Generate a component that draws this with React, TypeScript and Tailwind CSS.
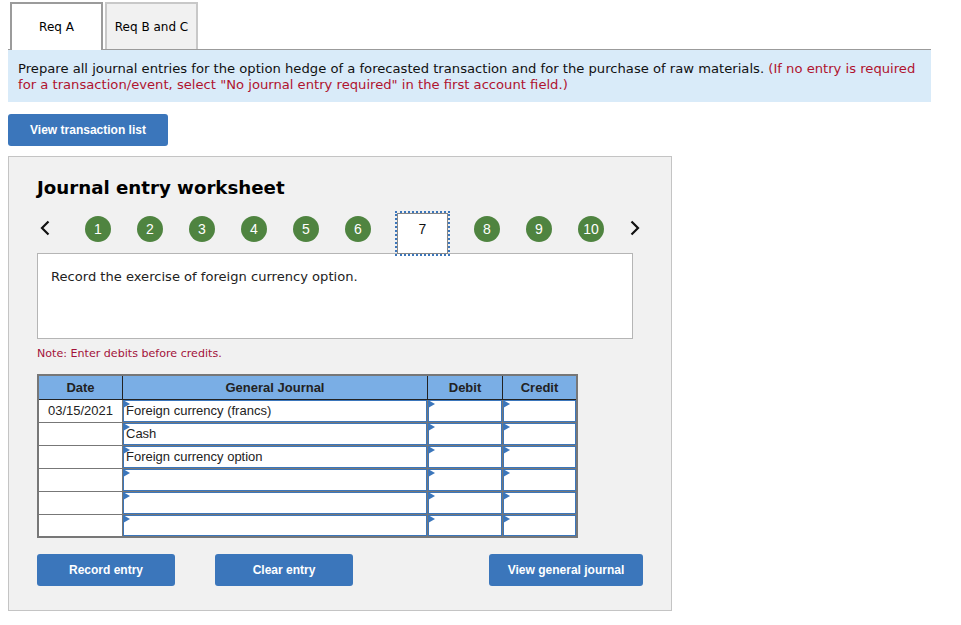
const verdana = "font-['DejaVu_Sans',Verdana,sans-serif]"
const arial = "font-['Liberation_Sans',Arial,sans-serif]"

const rows = ["Foreign currency (francs)", "Cash", "Foreign currency option", "", "", ""]

function Flag() {
  return (
    <svg className="absolute -left-[1px] -top-[1px]" width="7" height="8" viewBox="0 0 7 8">
      <path d="M0 0 L7 4 L0 8 Z" fill="#3b76bb" />
    </svg>
  )
}

function EntryCell({ width, text }: { width: string; text?: string }) {
  return (
    <div className={`relative h-full ${width} shrink-0 border border-[#3b76bb] bg-white pl-[2px] text-[13px] leading-[20px] text-[#222]`}>
      <Flag />
      {text}
    </div>
  )
}

function Step({ n }: { n: number }) {
  return (
    <div className={`mt-[4px] flex h-[26px] w-[26px] shrink-0 items-center justify-center rounded-full bg-[#4f8440] text-[14px] text-white ${arial}`}>
      {n}
    </div>
  )
}

function Btn({ label, width }: { label: string; width: string }) {
  return (
    <button className={`flex h-[32px] ${width} items-center justify-center rounded-[3px] bg-[#3b76bb] text-[12px] font-bold text-white ${arial}`}>
      {label}
    </button>
  )
}

export default function App() {
  return (
    <div className={`h-[625px] w-[961px] bg-white pl-[8px] pt-[2px] ${verdana}`}>
      {/* Tabs */}
      <div className="flex h-[48px] pl-[2px]">
        <div className="z-10 flex h-[48px] w-[93px] items-center justify-center border-2 border-b-0 border-[#9b9b9b] bg-white text-[12px] text-black">
          Req A
        </div>
        <div className="ml-[2px] flex h-[47px] w-[93px] items-center justify-center border-2 border-b-0 border-[#c8c8c8] bg-[#f1f1f1] text-[12px] text-black">
          Req B and C
        </div>
      </div>

      <div className="-mt-[1px] w-[923px] border-t border-[#9b9b9b] bg-[#d9ebf9] px-[10px] pb-[9px] pt-[11px] text-[13.15px] leading-[16px] text-[#111]">
        Prepare all journal entries for the option hedge of a forecasted transaction and for the purchase of raw materials.{" "}
        <span className="text-[#b0132f]">
          (If no entry is required for a transaction/event, select "No journal entry required" in the first account field.)
        </span>
      </div>

      <Btn label="View transaction list" width="w-[160px] mt-[12px]" />

      <div className="mt-[10px] h-[455px] w-[664px] border border-[#c4c4c4] bg-[#f1f1f1] pl-[28px] pt-[19px]">
        <h2 className="text-[18.2px] font-bold leading-[24px] text-black">Journal entry worksheet</h2>

        {/* Step navigation */}
        <div className="mt-[12px] flex h-[44px] w-[606px] items-start">
          <svg className="ml-[3px] mt-[8px] shrink-0" width="10" height="16" viewBox="0 0 10 16">
            <path d="M8.5 1.5 L2 8 L8.5 14.5" fill="none" stroke="#111" strokeWidth="2.2" />
          </svg>
          <div className="ml-[35px] flex items-start gap-[26px]">
            {[1, 2, 3, 4, 5, 6].map((n) => (
              <Step key={n} n={n} />
            ))}
            <div className="z-10 -ml-[2px] -mr-[2px] -mt-[1px] h-[45px] w-[55px] shrink-0 border-2 border-dotted border-[#3b76bb]">
              <div className={`h-[41px] border border-[#888] bg-white pt-[5px] text-center text-[14px] leading-[20px] text-[#111] ${arial}`}>
                7
              </div>
            </div>
            {[8, 9, 10].map((n) => (
              <Step key={n} n={n} />
            ))}
          </div>
          <svg className="ml-[26px] mt-[8px] shrink-0" width="10" height="16" viewBox="0 0 10 16">
            <path d="M1.5 1.5 L8 8 L1.5 14.5" fill="none" stroke="#111" strokeWidth="2.2" />
          </svg>
        </div>

        <div className="-mt-[3px] h-[86px] w-[596px] border border-[#b5b5b5] bg-white pl-[13px] pt-[14px] text-[13.08px] leading-[18px] text-[#222]">
          Record the exercise of foreign currency option.
        </div>

        <p className="mt-[8px] text-[11.1px] leading-[14px] text-[#a3123a]">Note: Enter debits before credits.</p>

        {/* Journal table */}
        <div className={`mt-[13px] w-[541px] border-2 border-[#777] bg-[#777] ${arial}`}>
          <div className="flex h-[24px] border-b border-[#222] bg-[#7aaee5] text-[13px] font-bold text-[#222]">
            <div className="flex w-[84px] items-center justify-center border-r border-[#222]">Date</div>
            <div className="flex w-[305px] items-center justify-center border-r border-[#222]">General Journal</div>
            <div className="flex w-[75px] items-center justify-center border-r border-[#222]">Debit</div>
            <div className="flex flex-1 items-center justify-center">Credit</div>
          </div>
          <div className="flex flex-col gap-[1px]">
            {rows.map((text, i) => (
              <div key={i} className={`flex gap-[1px] ${i === 5 ? "h-[21px]" : "h-[22px]"}`}>
                <div className="flex w-[83px] shrink-0 items-center justify-center bg-white text-[13px] text-[#222]">
                  {i === 0 ? "03/15/2021" : ""}
                </div>
                <EntryCell width="w-[304px]" text={text} />
                <EntryCell width="w-[74px]" />
                <EntryCell width="w-[73px]" />
              </div>
            ))}
          </div>
        </div>

        <div className="mt-[16px] flex w-[606px]">
          <Btn label="Record entry" width="w-[138px]" />
          <Btn label="Clear entry" width="w-[138px] ml-[40px]" />
          <Btn label="View general journal" width="w-[154px] ml-[136px]" />
        </div>
      </div>
    </div>
  )
}
